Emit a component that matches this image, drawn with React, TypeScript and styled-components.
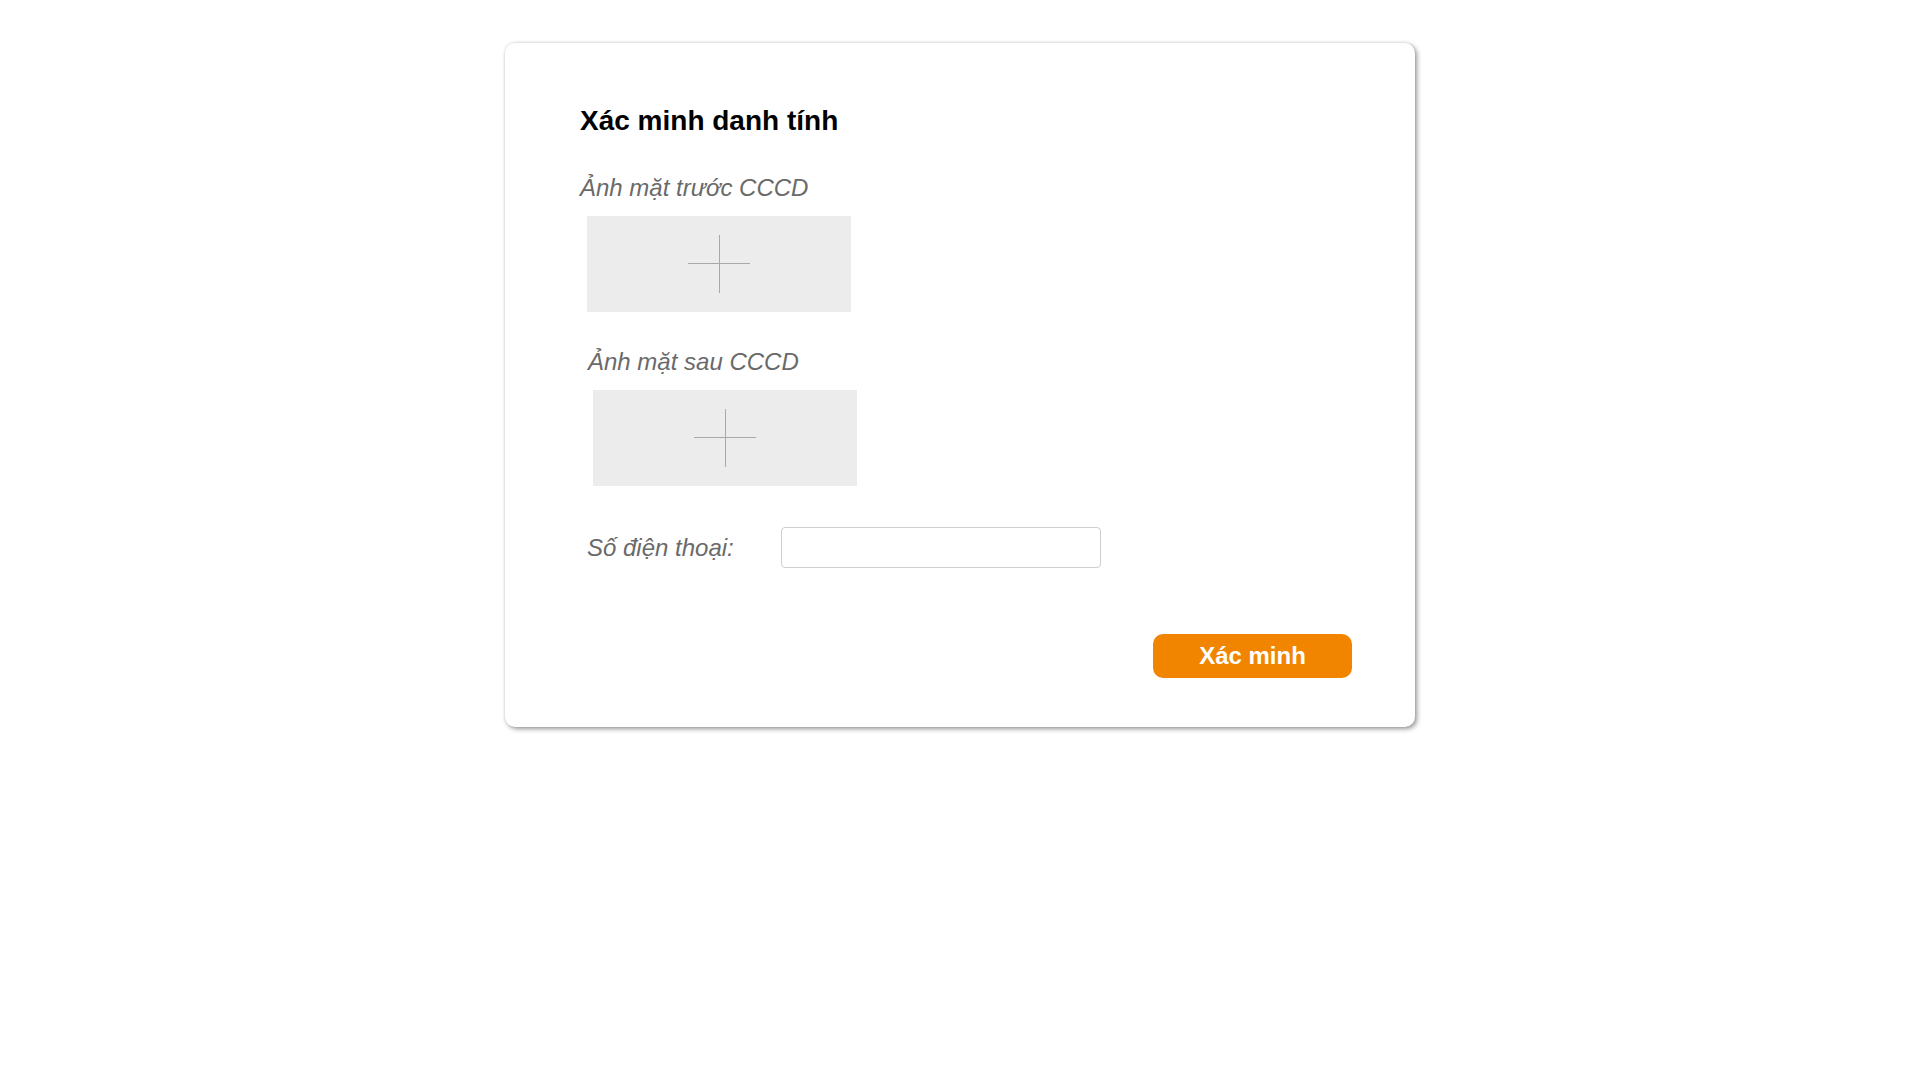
import React from "react";
import styled, { createGlobalStyle } from "styled-components";

const GlobalStyle = createGlobalStyle`
  html, body {
    margin: 0;
    padding: 0;
    background: #ffffff;
    font-family: "Liberation Sans", Arial, sans-serif;
  }
`;

const Page = styled.div`
  display: flex;
  justify-content: center;
  padding: 43px 0 40px;
`;

const Card = styled.div`
  box-sizing: border-box;
  width: 910px;
  background: #ffffff;
  border-radius: 10px;
  box-shadow: 2px 2px 5px rgba(0, 0, 0, 0.4), 0 0 3px rgba(0, 0, 0, 0.12);
  padding: 62px 63px 49px 75px;
  display: flex;
  flex-direction: column;
`;

const Title = styled.h1`
  margin: 0;
  font-size: 28px;
  line-height: 32px;
  font-weight: 700;
  color: #000000;
`;

const FieldLabel = styled.div<{ $indent?: number; $top: number }>`
  margin-top: ${(p) => p.$top}px;
  margin-left: ${(p) => p.$indent ?? 0}px;
  font-size: 24px;
  line-height: 28px;
  font-style: italic;
  color: #6a6a6a;
`;

const UploadBox = styled.button<{ $indent: number }>`
  margin: 14px 0 0 ${(p) => p.$indent}px;
  width: 264px;
  height: 96px;
  padding: 0;
  border: none;
  background: #ececec;
  display: flex;
  align-items: center;
  justify-content: center;
  cursor: pointer;
`;

const PhoneRow = styled.div`
  margin-top: 41px;
  margin-left: 7px;
  display: flex;
  align-items: center;
`;

const PhoneLabel = styled.label`
  width: 194px;
  font-size: 24px;
  line-height: 28px;
  font-style: italic;
  color: #6a6a6a;
`;

const PhoneInput = styled.input`
  box-sizing: border-box;
  width: 320px;
  height: 41px;
  border: 1px solid #cfcfcf;
  border-radius: 4px;
  padding: 0 10px;
  font-family: "Liberation Sans", Arial, sans-serif;
  font-size: 18px;
  outline: none;
`;

const Actions = styled.div`
  margin-top: 66px;
  display: flex;
  justify-content: flex-end;
`;

const SubmitButton = styled.button`
  width: 199px;
  height: 44px;
  border: none;
  border-radius: 10px;
  background: #f28500;
  color: #ffffff;
  font-family: "Liberation Sans", Arial, sans-serif;
  font-size: 24px;
  font-weight: 700;
  cursor: pointer;
`;

const PlusIcon = () => (
  <svg width="62" height="58" viewBox="0 0 62 58">
    <line x1="0" y1="28.5" x2="62" y2="28.5" stroke="#a9a9a9" strokeWidth="1" />
    <line x1="31.5" y1="0" x2="31.5" y2="58" stroke="#a9a9a9" strokeWidth="1" />
  </svg>
);

export default function App() {
  return (
    <>
      <GlobalStyle />
      <Page>
        <Card>
          <Title>Xác minh danh tính</Title>
          <FieldLabel $top={37}>Ảnh mặt trước CCCD</FieldLabel>
          <UploadBox $indent={7} type="button">
            <PlusIcon />
          </UploadBox>
          <FieldLabel $top={36} $indent={8}>
            Ảnh mặt sau CCCD
          </FieldLabel>
          <UploadBox $indent={13} type="button">
            <PlusIcon />
          </UploadBox>
          <PhoneRow>
            <PhoneLabel htmlFor="phone">Số điện thoại:</PhoneLabel>
            <PhoneInput id="phone" type="text" />
          </PhoneRow>
          <Actions>
            <SubmitButton type="button">Xác minh</SubmitButton>
          </Actions>
        </Card>
      </Page>
    </>
  );
}
